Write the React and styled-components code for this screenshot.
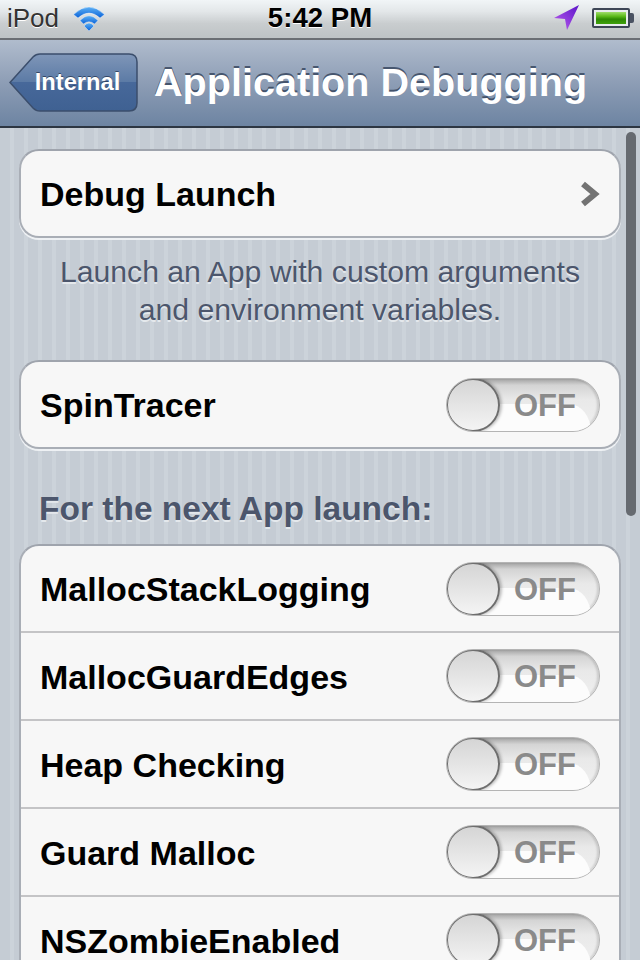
import React from 'react';
import styled, { createGlobalStyle } from 'styled-components';

const Global = createGlobalStyle`
  html, body {
    margin: 0;
    padding: 0;
    height: 960px;
    overflow: hidden;
    background: #c7ced6;
  }
  * { box-sizing: border-box; }
`;

const Screen = styled.div`
  position: relative;
  width: 640px;
  height: 960px;
  overflow: hidden;
  display: flex;
  flex-direction: column;
  font-family: "Liberation Sans", Arial, sans-serif;
`;

const StatusBar = styled.div`
  height: 40px;
  flex: none;
  display: grid;
  grid-template-columns: 1fr auto 1fr;
  align-items: center;
  padding: 0 7px 2px 7px;
  background: linear-gradient(#f1f5f7 0%, #e3e7e9 30%, #c9cdcf 62%, #bfc4c6 95%);
  border-bottom: 2px solid #6b6f74;
`;

const StatusLeft = styled.div`
  display: flex;
  align-items: center;
  gap: 14px;
`;

const StatusRight = styled.div`
  display: flex;
  align-items: center;
  justify-content: flex-end;
  gap: 12px;
`;

const Carrier = styled.span`
  font-size: 26px;
  color: #333;
  text-shadow: 0 1px 0 #fff;
  line-height: 1;
`;

const Clock = styled.span`
  font-size: 27.6px;
  font-weight: 700;
  color: #000;
  text-shadow: 0 1px 0 #fff;
  line-height: 1;
`;

const Battery = styled.div`
  position: relative;
  width: 38px;
  height: 20px;
  margin-right: 3px;
  padding: 2px;
  border: 2px solid #3d4656;
  border-radius: 2px;
  background: #e8ecee;
  &::after {
    content: "";
    position: absolute;
    right: -6px;
    top: 3px;
    width: 4px;
    height: 10px;
    background: #4a5262;
    border-radius: 0 2px 2px 0;
  }
`;

const BatteryFill = styled.div`
  height: 100%;
  background: linear-gradient(#9fdc6c 0%, #5dbb1c 35%, #2e8a04 60%, #3fa00c 100%);
`;

const NavBar = styled.div`
  height: 88px;
  flex: none;
  display: flex;
  align-items: center;
  padding: 0 0 2px 9px;
  gap: 16px;
  background: linear-gradient(#b0bccd 0%, #8d9db5 50%, #6d84a2 100%);
  border-bottom: 2px solid #2d3642;
`;

const BackButton = styled.div`
  position: relative;
  width: 129px;
  height: 59px;
  flex: none;
  display: flex;
  align-items: center;
  justify-content: center;
  padding-left: 8px;
  color: #fff;
  font-size: 23.7px;
  font-weight: 700;
  text-shadow: 0 -1px 0 rgba(30, 45, 70, 0.7);
`;

const BackShape = styled.svg`
  position: absolute;
  inset: 0;
`;

const BackLabel = styled.span`
  position: relative;
`;

const Title = styled.h1`
  margin: 0;
  font-size: 39.6px;
  font-weight: 700;
  color: #fff;
  white-space: nowrap;
  text-shadow: 0 -2px 0 rgba(45, 60, 85, 0.75);
`;

const Content = styled.div`
  flex: 1;
  padding: 21px 19px 0;
  background: repeating-linear-gradient(90deg, #c5ccd4 0, #c5ccd4 10px, #ccd3da 10px, #ccd3da 14px);
`;

const Group = styled.div`
  background: #f7f7f7;
  width: 602px;
  border-radius: 20px;
  border: 2px solid #a9aeb6;
  border-top-color: #9fa4ad;
  box-shadow: 0 2px 0 #eef1f4;
  overflow: hidden;
`;

const Row = styled.div`
  height: ${(p) => (p.$first ? 85 : 88)}px;
  display: flex;
  align-items: center;
  justify-content: space-between;
  padding: 0 19px 0 19px;
  border-top: ${(p) => (p.$first ? 'none' : '2px solid #c4c4c6')};
`;

const RowLabel = styled.span`
  padding-top: 2px;
  font-size: 34px;
  font-weight: 700;
  color: #000;
`;

const Footer = styled.p`
  margin: 15px 0 31px;
  text-align: center;
  font-size: 30.2px;
  line-height: 38px;
  color: #4c566c;
  text-shadow: 0 2px 0 #e4e8ec;
`;

const SectionHeader = styled.h2`
  margin: 42px 0 17px 20px;
  font-size: 33.5px;
  line-height: 36px;
  font-weight: 700;
  color: #4c566c;
  text-shadow: 0 2px 0 #e4e8ec;
`;

const Toggle = styled.div`
  position: relative;
  width: 154px;
  height: 54px;
  flex: none;
  border-radius: 27px;
  border: 1px solid #b4b4b4;
  overflow: hidden;
  background: linear-gradient(#a4a4a4 0%, #d4d4d4 12%, #e9e9e9 40%, #f0f0f0 100%);
  box-shadow: inset -2px 0 2px rgba(0, 0, 0, 0.12);
  display: flex;
  align-items: center;
  justify-content: flex-end;
  padding-right: 23px;
  color: #8a8a8a;
  font-size: 31px;
  font-weight: 700;
  &::before {
    content: "";
    position: absolute;
    left: 0;
    right: 8px;
    top: 25px;
    height: 40px;
    background: #fcfcfc;
    border-radius: 0 22px 0 0 / 0 28px 0 0;
  }
`;

const ToggleLabel = styled.span`
  position: relative;
  padding-top: 2px;
`;

const Knob = styled.div`
  position: absolute;
  left: -1px;
  top: -1px;
  width: 54px;
  height: 54px;
  border-radius: 50%;
  border: 2px solid #6e6e6e;
  background: linear-gradient(#d5d5d5 0%, #f4f4f4 100%);
  box-shadow: 2px 0 3px rgba(0, 0, 0, 0.25);
`;

const ScrollThumb = styled.div`
  position: absolute;
  right: 4px;
  top: 132px;
  width: 10px;
  height: 384px;
  border-radius: 5px;
  background: #666a70;
`;

function Switch() {
  return (
    <Toggle>
      <Knob />
      <ToggleLabel>OFF</ToggleLabel>
    </Toggle>
  );
}

const launchOptions = [
  'MallocStackLogging',
  'MallocGuardEdges',
  'Heap Checking',
  'Guard Malloc',
  'NSZombieEnabled',
];

export default function App() {
  return (
    <Screen>
      <Global />
      <StatusBar>
        <StatusLeft>
          <Carrier>iPod</Carrier>
          <svg width="32" height="26" viewBox="0 0 32 26">
            <defs>
              <linearGradient id="wifi" x1="0" y1="0" x2="0" y2="1">
                <stop offset="0" stopColor="#5cb0f5" />
                <stop offset="1" stopColor="#0a62d8" />
              </linearGradient>
            </defs>
            <g fill="url(#wifi)" stroke="#fff" strokeOpacity="0.55" strokeWidth="0.7">
              <path d="M0.5 9.5 Q16 -5.5 31.5 9.5 L27 13 Q16 3 5 13 Z" />
              <path d="M7 15.5 Q16 6 25 15.5 L21.5 19 Q16 14.5 10.5 19 Z" />
              <path d="M11 21 Q16 15 21 21 L16 26 Z" />
            </g>
          </svg>
        </StatusLeft>
        <Clock>5:42 PM</Clock>
        <StatusRight>
          <svg width="26" height="26" viewBox="0 0 26 26">
            <defs>
              <linearGradient id="arrow" x1="1" y1="0" x2="0" y2="1">
                <stop offset="0" stopColor="#5a14c8" />
                <stop offset="1" stopColor="#c060f0" />
              </linearGradient>
            </defs>
            <path d="M25 0 L0 13 L11 14 L13 25 Z" fill="url(#arrow)" />
          </svg>
          <Battery>
            <BatteryFill />
          </Battery>
        </StatusRight>
      </StatusBar>

      <NavBar>
        <BackButton>
          <BackShape width="129" height="59" viewBox="0 0 129 59">
            <defs>
              <linearGradient id="back" x1="0" y1="0" x2="0" y2="1">
                <stop offset="0" stopColor="#7f96b8" />
                <stop offset="0.5" stopColor="#5b7aa5" />
                <stop offset="0.5" stopColor="#47689a" />
                <stop offset="1" stopColor="#3f6192" />
              </linearGradient>
            </defs>
            <path
              d="M1 29.5 L24 4 Q27 1 31 1 L120 1 Q128 1 128 9 L128 50 Q128 58 120 58 L31 58 Q27 58 24 55 Z"
              fill="url(#back)"
              stroke="#3b4e6c"
              strokeWidth="1.5"
            />
          </BackShape>
          <BackLabel>Internal</BackLabel>
        </BackButton>
        <Title>Application Debugging</Title>
      </NavBar>

      <Content>
        <Group>
          <Row $first>
            <RowLabel>Debug Launch</RowLabel>
            <svg width="20" height="26" viewBox="0 0 20 26" fill="none">
              <path d="M3 3 L15 13 L3 23" stroke="#737373" strokeWidth="6" />
            </svg>
          </Row>
        </Group>
        <Footer>
          Launch an App with custom arguments
          <br />
          and environment variables.
        </Footer>
        <Group>
          <Row $first>
            <RowLabel>SpinTracer</RowLabel>
            <Switch />
          </Row>
        </Group>
        <SectionHeader>For the next App launch:</SectionHeader>
        <Group>
          {launchOptions.map((name, i) => (
            <Row key={name} $first={i === 0}>
              <RowLabel>{name}</RowLabel>
              <Switch />
            </Row>
          ))}
        </Group>
      </Content>
      <ScrollThumb />
    </Screen>
  );
}
